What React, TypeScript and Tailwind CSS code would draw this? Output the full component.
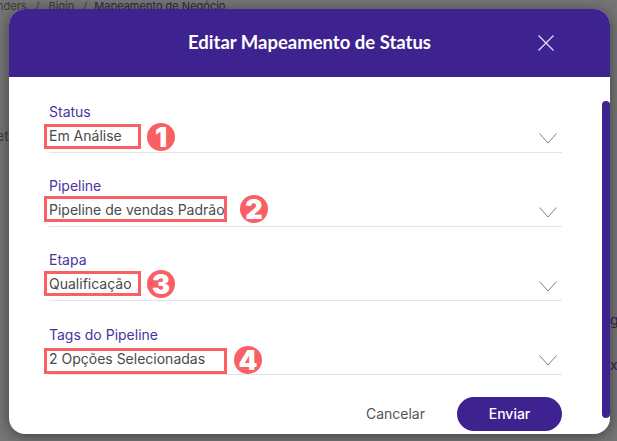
const fields = [
  {
    label: 'Status',
    value: 'Em Análise',
    num: '1',
    labelClass: '',
    valueClass: '',
    box: 'absolute left-[-5px] top-[-2px] h-[25px] w-[97px] border-[3px] border-[#fa5f63]',
    circle: 'absolute left-[98px] top-[-3px]',
  },
  {
    label: 'Pipeline',
    value: 'Pipeline de vendas Padrão',
    num: '2',
    labelClass: '',
    valueClass: '',
    box: 'absolute left-[-5px] top-[-4px] h-[26px] w-[183px] border-[3px] border-[#fa5f63]',
    circle: 'absolute left-[191px] top-[-5px]',
  },
  {
    label: 'Etapa',
    value: 'Qualificação',
    num: '3',
    labelClass: '',
    valueClass: '',
    box: 'absolute left-[-5px] top-[-3px] h-[25px] w-[97px] border-[3px] border-[#fa5f63]',
    circle: 'absolute left-[98px] top-[-4px]',
  },
  {
    label: 'Tags do Pipeline',
    value: '2 Opções Selecionadas',
    num: '4',
    labelClass: 'translate-y-[1px]',
    valueClass: 'translate-y-[1px]',
    box: 'absolute left-[-5px] top-0 h-[26px] w-[183px] border-[3px] border-[#fa5f63]',
    circle: 'absolute left-[185px] top-[-2px]',
  },
];

function Field({ field }: { field: (typeof fields)[number] }) {
  return (
    <div className="border-b border-[#e4e4e4] pb-[6px]">
      <div className={'text-sm leading-5 text-[#4a34a0] ' + field.labelClass}>{field.label}</div>
      <div className="relative mt-1 flex h-5 items-center justify-between text-sm text-[#4a4a4a]">
        <span className={field.valueClass}>{field.value}</span>
        <svg className="mr-[5px] mt-[5px] h-[11px] w-[18px]" viewBox="0 0 18 11" fill="none" stroke="#808080" strokeWidth="1">
          <path d="M0.5 0.5L9 10L17.5 0.5" />
        </svg>
        {/* Annotation */}
        <div className={field.box}></div>
        <div className={field.circle + ' flex h-7 w-7 items-center justify-center rounded-full bg-[#fa5f63] text-[27px] font-black leading-none text-white'}>
          {field.num}
        </div>
      </div>
    </div>
  );
}

export default function App() {
  return (
    <div className="relative h-[441px] w-[617px] overflow-hidden bg-[#757575] pl-[9px] pt-[9px] font-['Inter',sans-serif]">
      {/* Page behind the modal */}
      <div className="absolute left-0 top-[-2px] whitespace-nowrap text-[11px] text-[#3a3a3a]">
        <span className="ml-[-3px]">nders</span>
        <span className="mx-[9px]">/</span>
        <span>Bigin</span>
        <span className="ml-[9px] mr-[7px]">/</span>
        <span className="text-[#2f2350]">Mapeamento de Negócio</span>
      </div>
      <div className="absolute left-[-4px] top-[126px] text-sm text-[#3a3a3a]">et</div>
      <div className="absolute left-[610px] top-[310px] text-sm text-[#2f2350]">g</div>
      <div className="absolute left-[610px] top-[355px] text-sm text-[#2f2350]">xo</div>

      {/* Modal */}
      <div className="relative h-[425px] w-[601px] overflow-hidden rounded-2xl bg-white shadow-[0_2px_14px_rgba(0,0,0,0.45)]">
        <div className="relative flex h-[68px] items-center justify-center bg-[#3e228f]">
          <h1 className="font-['Lato',sans-serif] text-[18.5px] font-bold text-white">Editar Mapeamento de Status</h1>
          <svg className="absolute left-[529px] top-[26px] h-4 w-4" viewBox="0 0 16 16" fill="none" stroke="#e4e0f0" strokeWidth="1.2">
            <path d="M0.5 0.5L15.5 15.5M15.5 0.5L0.5 15.5" />
          </svg>
        </div>

        <div className="flex flex-col px-10 pr-[48px] pt-[25px]">
          <div className="flex flex-col gap-[23px]">
            {fields.map((f) => (
              <Field key={f.label} field={f} />
            ))}
          </div>
          <div className="mt-[22px] flex items-center justify-end">
            <button className="mr-[32px] text-sm text-[#555555]">Cancelar</button>
            <button className="h-[34px] w-[105px] rounded-full bg-[#3e228f] text-sm font-medium text-white">Enviar</button>
          </div>
        </div>

        {/* Scrollbar */}
        <div className="absolute bottom-[16px] right-0 top-[92px] w-2 rounded-full bg-[#3e228f]"></div>
      </div>
    </div>
  );
}
